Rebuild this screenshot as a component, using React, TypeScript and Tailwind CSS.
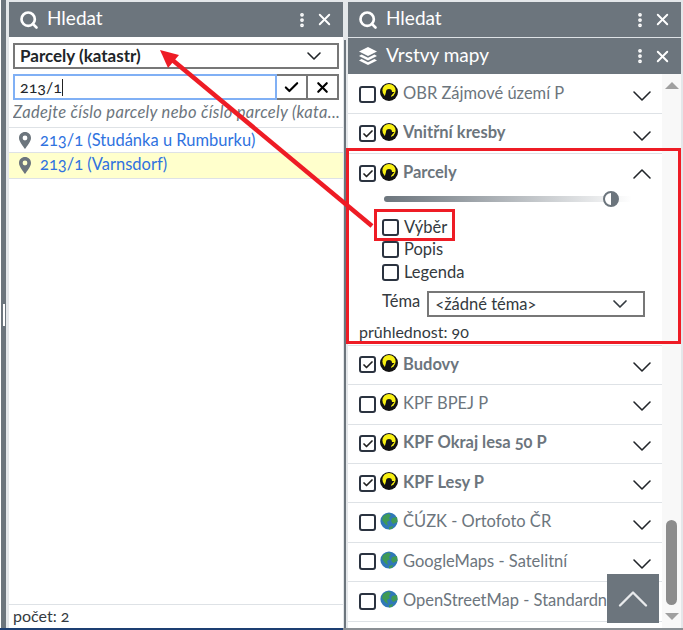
import { Check, ChevronDown, ChevronUp, EllipsisVertical, Search, X } from 'lucide-react';

const font = 'font-["Lato","Open_Sans",sans-serif] [font-variant-numeric:oldstyle-nums]';

function LayersIcon() {
  return (
    <svg width="20" height="20" viewBox="0 0 20 20" fill="currentColor" className="shrink-0">
      <path d="M10 1 L19 5.5 L10 10 L1 5.5 Z" />
      <path d="M3.6 8.6 L10 11.8 L16.4 8.6 L19 10 L10 14.5 L1 10 Z" />
      <path d="M3.6 13 L10 16.2 L16.4 13 L19 14.4 L10 19 L1 14.4 Z" />
    </svg>
  );
}

function PinIcon() {
  return (
    <svg width="12" height="17" viewBox="0 0 12 17" className="shrink-0">
      <path fillRule="evenodd" d="M6 0 C9.4 0 12 2.6 12 5.9 C12 9.5 8 14 6 17 C4 14 0 9.5 0 5.9 C0 2.6 2.6 0 6 0 Z M6 3.6 A2.4 2.4 0 1 0 6 8.4 A2.4 2.4 0 1 0 6 3.6 Z" fill="#6c757d" />
    </svg>
  );
}

function PanelHeader({ title, layers }: { title: string; layers?: boolean }) {
  return (
    <div className={`flex shrink-0 items-center bg-[#6c757d] pl-[10px] pr-[9px] text-white ${layers ? 'h-[36px]' : 'h-[35px]'}`}>
      {layers ? <LayersIcon /> : <Search size={20} strokeWidth={3.2} />}
      <span className="ml-[8px] flex-1 -translate-y-[1px] text-[19px]">{title}</span>
      <EllipsisVertical size={18} strokeWidth={3} />
      <X size={19} strokeWidth={2.4} className="ml-[4px]" />
    </div>
  );
}

function LayerIcon({ globe }: { globe?: boolean }) {
  if (globe) {
    return (
      <svg width="18" height="18" viewBox="0 0 18 18" className="shrink-0">
        <circle cx="9" cy="9" r="8.6" fill="#2f78b8" />
        <path d="M3 4 L8 1.5 L11 3 L9 6 L10 8 L7 10 L8 14 L5 12 L2 8 Z M12 6 L17 5 L17.5 10 L13 12 L11 9 Z M9 15 L13 14 L12 17 L9 17.5 Z" fill="#3f9a55" />
      </svg>
    );
  }
  return (
    <svg width="18" height="18" viewBox="0 0 18 18" className="shrink-0">
      <circle cx="9" cy="9" r="9" fill="#111" />
      <circle cx="9" cy="7.5" r="6.6" fill="#f7ef12" />
      <path d="M4 16 L6 9 A3 3 0 0 1 12 9 L14.5 9 L11 13 L12 17 Z" fill="#111" />
    </svg>
  );
}

function Box({ checked }: { checked?: boolean }) {
  return (
    <span className="flex size-[17px] shrink-0 items-center justify-center rounded-[3px] border-2 border-[#2b3340] bg-white">
      {checked && <Check size={12} strokeWidth={3.5} className="text-[#222]" />}
    </span>
  );
}

function LayerRow({ name, checked, globe }: { name: string; checked?: boolean; globe?: boolean }) {
  return (
    <div className="flex h-[39.4px] items-center border-b border-[#dee2e6] pl-[11px] pr-[4px]">
      <Box checked={checked} />
      <span className="ml-[4px] -translate-y-[2px]"><LayerIcon globe={globe} /></span>
      <span className={`ml-[5px] flex-1 -translate-y-[1px] overflow-hidden whitespace-nowrap text-[16.5px] text-[#6c757d] ${checked ? 'font-bold' : ''}`}>{name}</span>
      <ChevronDown size={32} strokeWidth={1.2} className="shrink-0 translate-y-[2px] text-[#212529]" />
    </div>
  );
}

export default function App() {
  return (
    <div className={`flex h-[630px] w-[683px] flex-col overflow-hidden bg-[#e4e7ea] ${font}`}>
      <div className="relative flex min-h-0 flex-1">
        {/* Left edge */}
        <div className="flex w-[9px] shrink-0">
          <div className="w-px bg-white" />
          <div className="flex w-[5px] flex-col items-center bg-[#6c757d] pt-[304px]">
            <span className="h-[22px] w-[2px] bg-white" />
          </div>
        </div>

        {/* Left panel */}
        <div className="mt-[2px] flex w-[334px] shrink-0 flex-col bg-white">
          <PanelHeader title="Hledat" />
          <div className="px-[4px] pt-[6px]">
            <div className="flex h-[26px] items-center border-2 border-[#777] pl-[5px] pr-[11px] text-[17px] font-bold text-[#212529]">
              <span className="flex-1">Parcely (katastr)</span>
              <ChevronDown size={24} strokeWidth={1.6} />
            </div>
            <div className="mt-[5px] flex h-[26px]">
              <div className="flex flex-1 items-center border-2 border-[#80b0f5] pl-[5px] text-[16px] text-[#212529]">
                213/1<span className="h-[17px] w-px bg-[#222]" />
              </div>
              <div className="flex w-[31px] items-center justify-center border-2 border-l-0 border-[#777]"><Check size={17} strokeWidth={3} /></div>
              <div className="flex w-[31px] items-center justify-center border-2 border-l-0 border-[#777]"><X size={17} strokeWidth={3} /></div>
            </div>
            <div className="mt-[2px] overflow-hidden whitespace-nowrap text-[16.5px] italic leading-[20px] tracking-[0.3px] text-[#6c757d]">Zadejte číslo parcely nebo číslo parcely (kata...</div>
          </div>
          <div className="mt-[5px] border-y border-[#dee2e6]">
            <div className="flex h-[25px] items-center border-b border-[#dee2e6] pl-[10px] text-[16.5px] text-[#2f72e0]">
              <PinIcon />
              <span className="ml-[9px]">213/1 (Studánka u Rumburku)</span>
            </div>
            <div className="flex h-[25px] items-center bg-[#ffffcc] pl-[10px] text-[16.5px] text-[#2f72e0]">
              <PinIcon />
              <span className="ml-[9px] -translate-y-[1px]">213/1 (Varnsdorf)</span>
            </div>
          </div>
          <div className="flex-1" />
          <div className="h-[24px] border-t border-[#dee2e6] pl-[4px] text-[16px] leading-[22px] text-[#343a40]">počet: 2</div>
        </div>

        <div className="mt-[40px] ml-[1px] w-[2px] shrink-0 bg-[#6c757d]" />
        <div className="w-[2px] shrink-0" />

        {/* Right panel */}
        <div className="mt-[2px] flex w-[333px] shrink-0 flex-col bg-white">
          <PanelHeader title="Hledat" />
          <div className="h-px shrink-0 bg-[#dee2e6]" />
          <PanelHeader title="Vrstvy mapy" layers />
          <div className="flex min-h-0 flex-1">
            <div className="min-w-0 flex-1 overflow-hidden pt-[1px]">
              <LayerRow name="OBR Zájmové území P" />
              <LayerRow name="Vnitřní kresby" checked />
              <div className="h-[192px] border-b border-[#dee2e6]">
                <div className="flex h-[40px] items-center pl-[11px] pr-[4px]">
                  <Box checked />
                  <span className="ml-[4px] -translate-y-[2px]"><LayerIcon /></span>
                  <span className="ml-[5px] flex-1 -translate-y-[1px] text-[16.5px] font-bold text-[#6c757d]">Parcely</span>
                  <ChevronUp size={32} strokeWidth={1.2} className="text-[#212529]" />
                </div>
                <div className="relative ml-[36px] mt-[2px] h-[6px] w-[248px] rounded-full bg-gradient-to-r from-[#6c757d] to-white">
                  <span className="absolute left-[219px] top-[-5px] h-[16px] w-[16px] rounded-full border-2 border-[#6c757d] bg-[linear-gradient(90deg,#fff_50%,#6c757d_50%)]" />
                </div>
                <div className="ml-[34px] mt-[14px] flex flex-col text-[16.5px] leading-[22.5px] text-[#343a40]">
                  <label className="flex items-center gap-[5px]"><Box />Výběr</label>
                  <label className="flex items-center gap-[5px]"><Box />Popis</label>
                  <label className="flex items-center gap-[5px]"><Box />Legenda</label>
                </div>
                <div className="ml-[34px] mt-[8px] flex items-start text-[16.5px] text-[#343a40]">
                  <span className="leading-[20px]">Téma</span>
                  <div className="ml-[7px] flex h-[26px] w-[218px] items-center border-2 border-[#777] pl-[6px] pr-[11px]">
                    <span className="flex-1">&lt;žádné téma&gt;</span>
                    <ChevronDown size={24} strokeWidth={1.7} />
                  </div>
                </div>
                <div className="ml-[11px] mt-[5px] text-[16px] leading-[20px] text-[#343a40]">průhlednost: 90</div>
              </div>
              <LayerRow name="Budovy" checked />
              <LayerRow name="KPF BPEJ P" />
              <LayerRow name="KPF Okraj lesa 50 P" checked />
              <LayerRow name="KPF Lesy P" checked />
              <LayerRow name="ČÚZK - Ortofoto ČR" globe />
              <LayerRow name="GoogleMaps - Satelitní" globe />
              <LayerRow name="OpenStreetMap - Standardní" globe />
            </div>
            {/* Scrollbar */}
            <div className="flex w-[19px] shrink-0 flex-col items-center bg-[#f8f8f8] pt-[8px]">
              <span className="h-0 w-0 border-x-[7px] border-b-[7px] border-x-transparent border-b-[#a0a0a0]" />
              <div className="flex-1" />
              <span className="h-[85px] w-[11px] rounded-full bg-[#8c8c8c]" />
              <span className="mb-[8px] mt-[8px] h-0 w-0 border-x-[7px] border-t-[7px] border-x-transparent border-t-[#a0a0a0]" />
            </div>
          </div>
        </div>

        {/* Scroll to top */}
        <div className="absolute left-[607px] top-[574px] flex h-[49px] w-[52px] items-center justify-center bg-[#6c757d] text-[#e8eaec]">
          <ChevronUp size={64} strokeWidth={1.1} />
        </div>

        {/* Annotations */}
        <div className="pointer-events-none absolute left-[346px] top-[148px] h-[196px] w-[335px] border-[3px] border-[#ee1c25]" />
        <div className="pointer-events-none absolute left-[374px] top-[209px] h-[32px] w-[81px] border-[3px] border-[#ee1c25]" />
        <svg className="pointer-events-none absolute left-0 top-0" width="683" height="630">
          <path d="M372 226 L170 58" stroke="#ee1c25" strokeWidth="4.5" />
          <path d="M160 50 L179 55 L168 68 Z" fill="#ee1c25" />
        </svg>
      </div>
      <div className="flex h-[2px] shrink-0">
        <div className="w-[343px] bg-[#1d3f72]" />
        <div className="flex-1 bg-[#8a8f94]" />
      </div>
    </div>
  );
}
